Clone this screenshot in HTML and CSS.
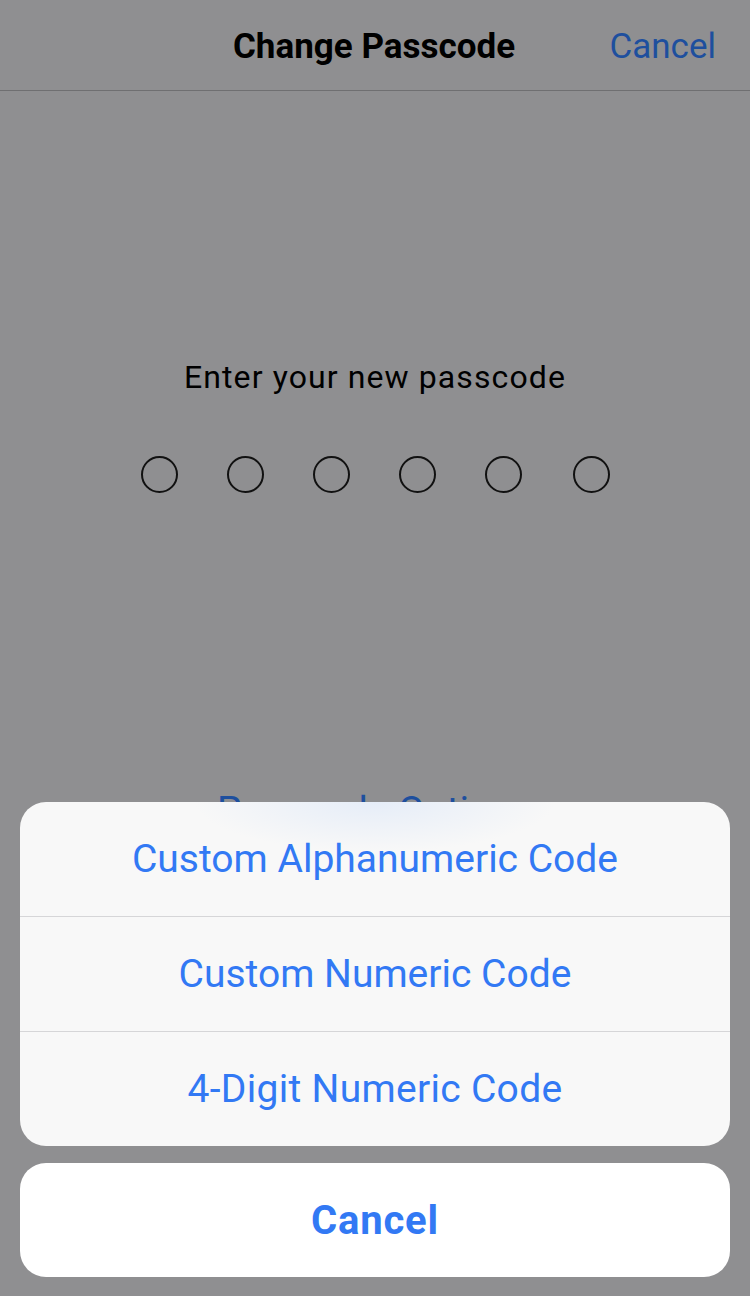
FILE: index.html
```html
<!DOCTYPE html>
<html>
<head>
<meta charset="utf-8">
<link rel="stylesheet" href="styles.css">
</head>
<body>
<div class="screen">
  <header class="nav">
    <div class="nav-title">Change Passcode</div>
    <div class="nav-cancel">Cancel</div>
  </header>
  <main class="content">
    <div class="prompt">Enter your new passcode</div>
    <div class="dots">
      <span class="dot"></span><span class="dot"></span><span class="dot"></span>
      <span class="dot"></span><span class="dot"></span><span class="dot"></span>
    </div>
    <div class="options">Passcode Options</div>
  </main>
  <div class="sheet">
    <div class="group">
      <div class="row">Custom Alphanumeric Code</div>
      <div class="row">Custom Numeric Code</div>
      <div class="row">4-Digit Numeric Code</div>
    </div>
    <div class="cancel-btn">Cancel</div>
  </div>
</div>
</body>
</html>
```
FILE: styles.css
```css
html, body {
  margin: 0;
  padding: 0;
}
body {
  font-family: Roboto, "Liberation Sans", sans-serif;
  background: #8f8f91;
}
.screen {
  position: relative;
  width: 750px;
  height: 1296px;
  overflow: hidden;
  background: #8f8f91;
}
.nav {
  height: 90px;
  border-bottom: 1px solid #6f6f71;
  display: flex;
  align-items: center;
  justify-content: center;
  position: relative;
}
.nav-title {
  font-size: 35px;
  font-weight: 700;
  color: #000;
  line-height: 40px;
  margin-top: 4px;
  margin-left: -2px;
}
.nav-cancel {
  position: absolute;
  right: 34px;
  top: 27px;
  font-size: 35px;
  line-height: 40px;
  color: #1e4f9e;
}
.content {
  display: flex;
  flex-direction: column;
  align-items: center;
  padding-top: 268px;
}
.prompt {
  font-size: 32px;
  color: #000;
  line-height: 36px;
  letter-spacing: 1.1px;
}
.dots {
  display: flex;
  gap: 49px;
  margin-top: 61px;
}
.dot {
  width: 33px;
  height: 33px;
  border: 2px solid #111;
  border-radius: 50%;
}
.dots .dot:last-child {
  margin-left: 2px;
}
.options {
  margin-top: 298px;
  font-size: 39px;
  line-height: 40px;
  color: #1e4f9e;
}
.sheet {
  position: absolute;
  left: 20px;
  right: 20px;
  top: 802px;
  display: flex;
  flex-direction: column;
  gap: 17px;
}
.group {
  background: #f8f8f8;
  background-image: radial-gradient(ellipse 180px 50px at 50% 0px, rgba(215, 228, 248, 0.55), rgba(248, 248, 248, 0));
  border-radius: 26px;
  overflow: hidden;
}
.row {
  height: 114px;
  display: flex;
  align-items: center;
  justify-content: center;
  font-size: 39px;
  color: #3279f4;
  border-top: 1px solid #d6d6d8;
}
.row:first-child {
  border-top: none;
}
.row:last-child {
  letter-spacing: 0.3px;
}
.cancel-btn {
  height: 114px;
  background: #fff;
  border-radius: 26px;
  display: flex;
  align-items: center;
  justify-content: center;
  font-size: 40px;
  font-weight: 700;
  letter-spacing: 0.8px;
  color: #3279f4;
}
```
